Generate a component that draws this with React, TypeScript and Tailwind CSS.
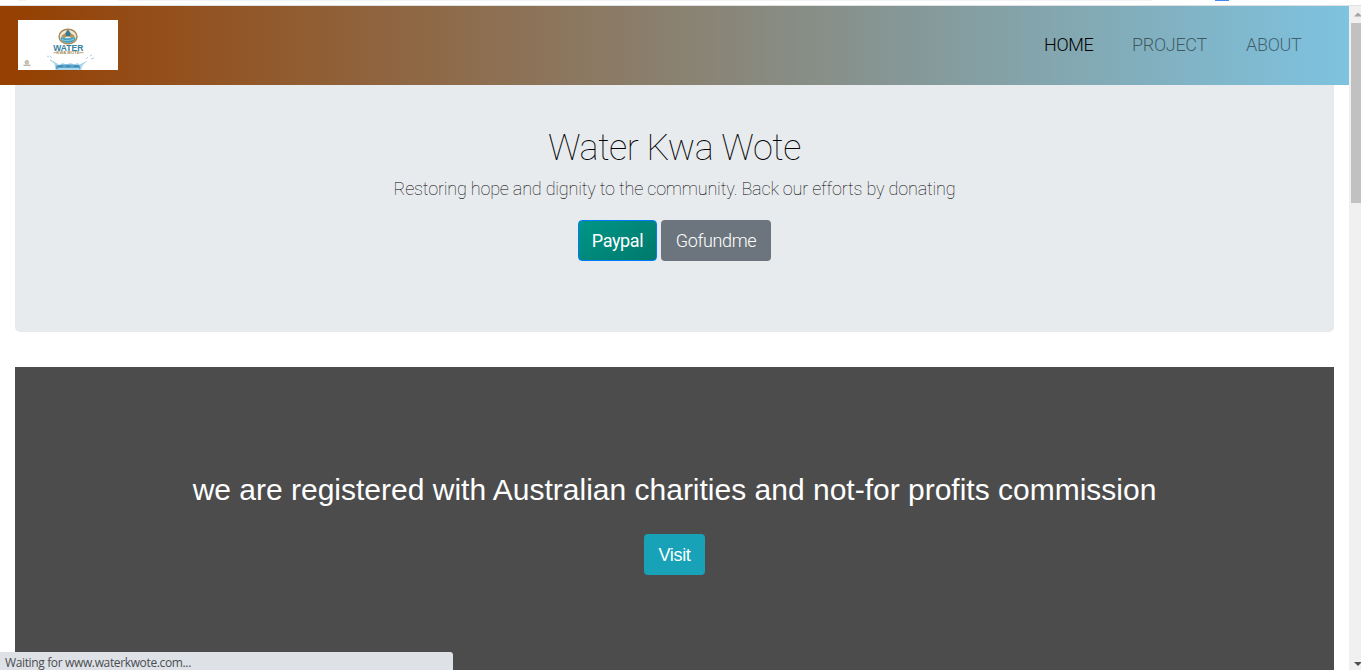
import React from "react";

function Logo() {
  return (
    <svg width="100" height="50" viewBox="0 0 100 50" className="block bg-white">
      <ellipse cx="50" cy="16.5" rx="9" ry="7.3" fill="#f1ead9" stroke="#a98a55" strokeWidth="1.400" />
      <path d="M43 16l4.500-3 2-3.500 3 3.500 4.500 3-3 2-4-2-4 2z" fill="#b89257" />
      <path d="M50 9.800c2 2.500 2.500 3 2.500 4.200a2.500 2.500 0 0 1-5 0c0-1.200.7-2 2.500-4.200z" fill="#337b96" />
      <path d="M42.500 17.500c3-1 4 1 7 .8s5-1.800 8-.8c0 3.200-3.500 5.300-7.500 5.300s-7-2-7.500-5.300z" fill="#3fa0c2" />
      <path d="M44 19.500c3 1.500 8 1.500 12-.5" fill="none" stroke="#9fd4e0" strokeWidth=".8" />
      <text x="50.300" y="31" textAnchor="middle" textLength="30" lengthAdjust="spacingAndGlyphs" fontFamily="Liberation Sans, sans-serif" fontWeight="700" fontSize="9.800" fill="#35809f">WATER</text>
      <text x="50" y="34.300" textAnchor="middle" textLength="23" lengthAdjust="spacingAndGlyphs" fontFamily="Liberation Sans, sans-serif" fontWeight="700" fontSize="4.200" fill="#a58b58">KWA WOTE</text>
      <path d="M35.500 32.700h3.500M61.500 32.700h4" stroke="#b79b68" strokeWidth=".9" />
      <path d="M37.500 50l-1-6-5-5 7 4 3 2 3-2 4 1.500 4-1.500 4 1.500 3-1.500 2 1.500 8-4-5 5-1.500 5z" fill="#aad6eb" />
      <path d="M38 45.500c5-1.500 19-1.500 24 0V49H38z" fill="#5ba4ca" />
      <path d="M40 46.200h5m3 0h4m4 0h5" stroke="#3480ad" strokeWidth="1.200" />
      <path d="M40 48.500h21" stroke="#d8edf6" strokeWidth=".7" />
      <path d="M29 36l2 1m1 3l2 1m-2-5l2 2m34 1l2-2m2-1l2-1m-1 4l3-1" stroke="#abd5e6" strokeWidth="1" />
      <circle cx="8.800" cy="42.300" r="1.800" fill="#d4cab8" stroke="#aaa392" strokeWidth=".8" />
      <path d="M5.500 45.300h7" stroke="#b4aea4" strokeWidth="1.300" />
    </svg>
  );
}

function Navbar() {
  return (
    <nav className="flex h-[79px] shrink-0 items-start justify-between bg-[linear-gradient(to_right,#963f00,#7ec3e0)] pr-12 pl-[18px]">
      <a href="#" className="mt-[14px]"><Logo /></a>
      <div className="mt-[25px] flex text-[18px] leading-7 font-light tracking-[-0.3px]">
        <a href="#" className="w-[88px] text-black">HOME</a>
        <a href="#" className="w-[114px] text-black/50">PROJECT</a>
        <a href="#" className="w-[55px] text-black/50">ABOUT</a>
      </div>
    </nav>
  );
}

function Scrollbar() {
  return (
    <div className="flex w-3 shrink-0 flex-col bg-[#f0f0f0] pl-0.5">
      <svg width="10" height="17" className="block shrink-0"><path d="M3 10.500L7 6.500L11 10.500z" fill="#a3a3a3" /></svg>
      <div className="h-[180px] bg-[#c1c1c1]" />
      <svg width="10" height="17" className="mt-auto block shrink-0"><path d="M3 9L11 9L7 13z" fill="#505050" /></svg>
    </div>
  );
}

export default function App() {
  return (
    <div className="relative flex h-[670px] w-[1361px] flex-col overflow-hidden bg-white font-['Roboto',sans-serif]">
      <div className="flex h-1.5 shrink-0 items-start border-b border-[#dfe1e3]">
        <div className="ml-[18px] h-px w-2 bg-[#f1f3f4]" />
        <div className="ml-[92px] h-px w-[1034px] bg-[#f1f3f4]" />
        <div className="ml-[63px] h-px w-[14px] bg-[#4285f4]" />
      </div>
      <div className="flex min-h-0 flex-1">
        <div className="flex min-w-0 flex-1 flex-col">
          <Navbar />
          <main className="flex min-h-0 flex-1 flex-col px-[15px]">
            <section className="flex h-[247px] shrink-0 flex-col items-center rounded-b-[5px] bg-[#e8ebee] pt-[42px] text-black">
              <h1 className="text-[36px] leading-[43px] font-thin tracking-[-0.45px] whitespace-nowrap">Water Kwa Wote</h1>
              <p className="mt-[5px] text-[18px] leading-[27px] font-thin tracking-[-0.18px] whitespace-nowrap">Restoring hope and dignity to the community. Back our efforts by donating</p>
              <div className="mt-[18px] flex gap-1">
                <button className="h-[41px] w-[79px] rounded border border-[#007bff] bg-[linear-gradient(145deg,#009688,#00796b)] text-[18px] tracking-[-0.4px] text-white">Paypal</button>
                <button className="h-[41px] w-[110px] rounded bg-[#6c757d] text-[18px] font-light tracking-[-0.35px] text-white">Gofundme</button>
              </div>
            </section>
            <section className="mt-[35px] flex flex-1 flex-col items-center bg-[#4c4c4c] pt-[105px] font-['Liberation_Sans',sans-serif] text-white">
              <h2 className="text-[30px] leading-9 whitespace-nowrap">we are registered with Australian charities and not-for profits commission</h2>
              <button className="mt-[26px] h-[41px] w-[61px] rounded bg-[#17a2b8] pt-0.5 text-[18px] tracking-[-0.35px]">Visit</button>
            </section>
          </main>
        </div>
        <Scrollbar />
      </div>
      <div className="absolute bottom-0 left-0 flex h-[18px] w-[453px] items-center rounded-tr-[3px] bg-[#dee1e6] pt-1 pl-[5px] font-['Open_Sans',sans-serif] text-[12px] tracking-[-0.36px] text-[#4a4d51]">
        Waiting for www.waterkwote.com...
      </div>
    </div>
  );
}
